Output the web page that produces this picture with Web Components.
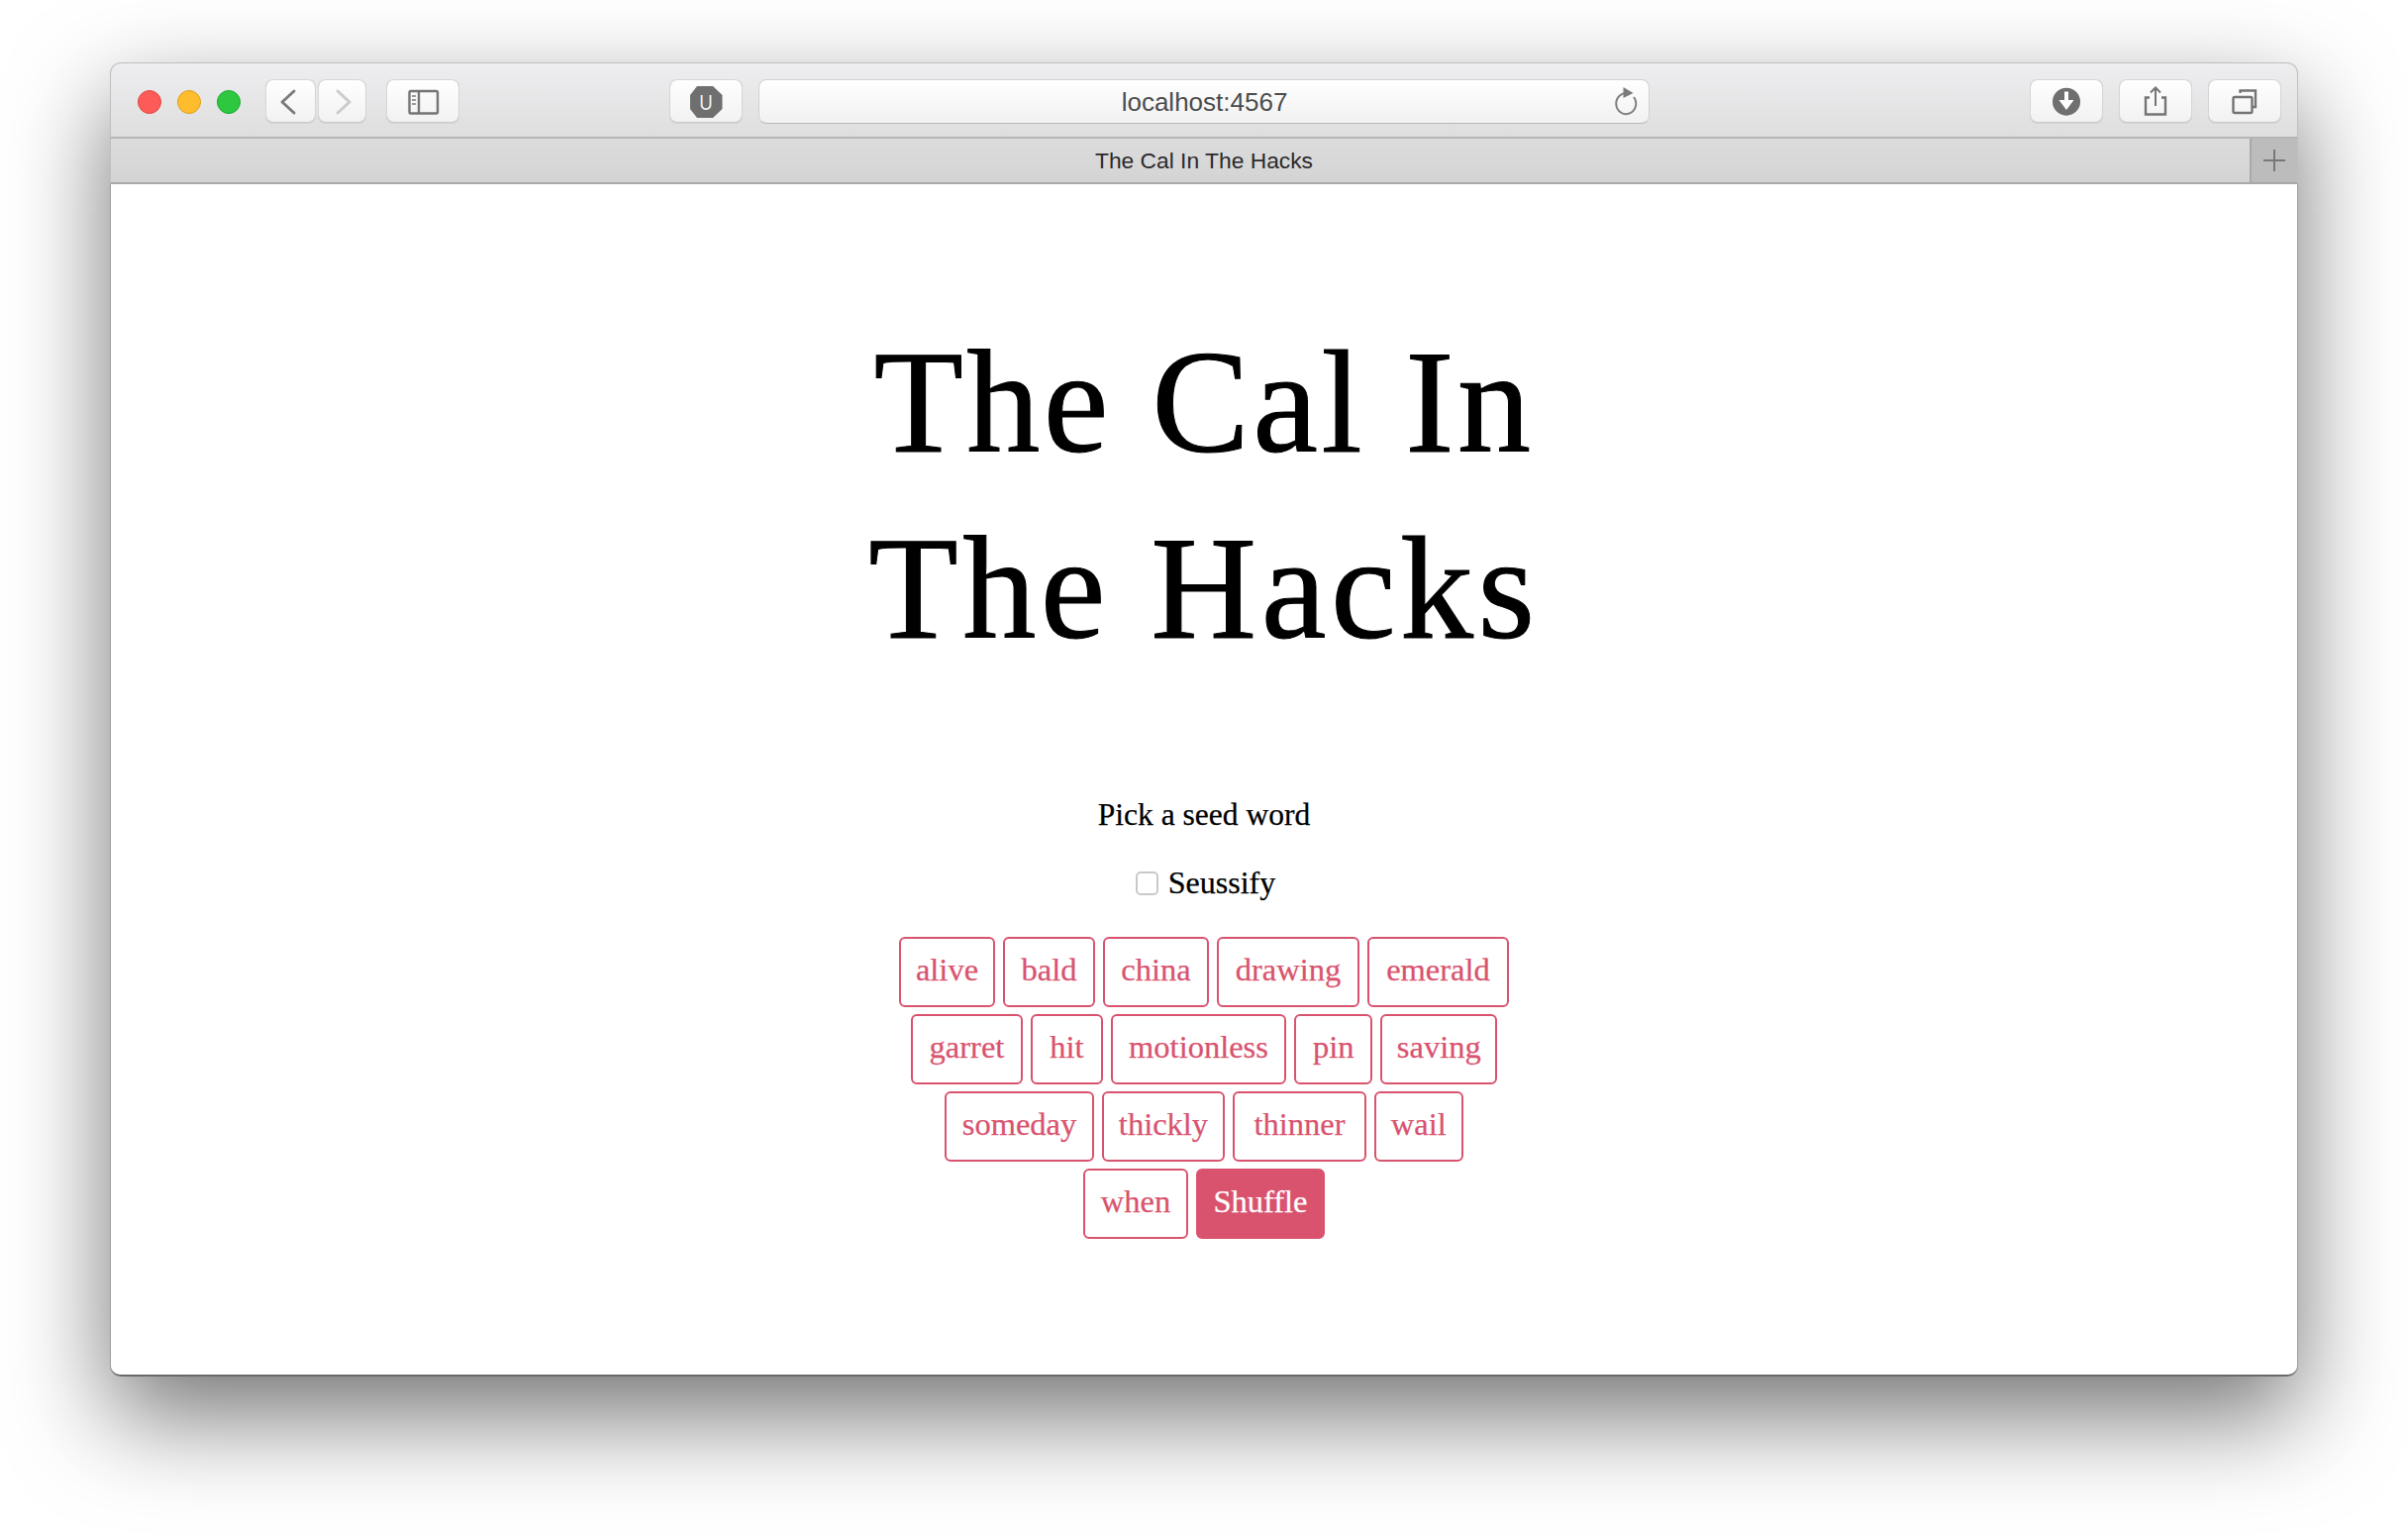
<!DOCTYPE html>
<html>
<head>
<meta charset="utf-8">
<title>The Cal In The Hacks</title>
<style>
  html, body { margin: 0; background: #fff; }
  body { padding: 63px 111px 160px; height: 1550px; box-sizing: border-box; overflow: hidden; }
</style>
</head>
<body>
<browser-window page-title="The Cal In The Hacks" address="localhost:4567">
  <cal-title>The Cal In<br><span style="letter-spacing: 4.5px">The Hacks</span></cal-title>
  <seed-picker>
    <seed-word width="97.5">alive</seed-word>
    <seed-word width="92.5">bald</seed-word>
    <seed-word width="107.5">china</seed-word>
    <seed-word width="143.5">drawing</seed-word>
    <seed-word width="143.5">emerald</seed-word>
    <seed-word width="113.5">garret</seed-word>
    <seed-word width="72.5">hit</seed-word>
    <seed-word width="177.5">motionless</seed-word>
    <seed-word width="79">pin</seed-word>
    <seed-word width="118">saving</seed-word>
    <seed-word width="150.5">someday</seed-word>
    <seed-word width="124.5">thickly</seed-word>
    <seed-word width="134.5">thinner</seed-word>
    <seed-word width="90">wail</seed-word>
    <seed-word width="106">when</seed-word>
    <seed-word width="130" primary>Shuffle</seed-word>
  </seed-picker>
</browser-window>

<script>
const ICONS = {
  back: `<svg width="51" height="45"><path d="M29 12 L17 23 L29 34" fill="none" stroke="#7c7c7c" stroke-width="3" stroke-linecap="round" stroke-linejoin="round"/></svg>`,
  forward: `<svg width="49" height="45"><path d="M20 12 L32 23 L20 34" fill="none" stroke="#cbcbcb" stroke-width="3" stroke-linecap="round" stroke-linejoin="round"/></svg>`,
  sidebar: `<svg width="74" height="45" fill="none" stroke="#747474" stroke-width="2.4">
    <rect x="23.5" y="12" width="28.5" height="22.5" rx="1.5"/>
    <path d="M33 12 V34.5"/>
    <path d="M26 17 H30 M26 21 H30 M26 25 H30" stroke="#999" stroke-width="2.2"/>
  </svg>`,
  ublock: `<svg width="74" height="45">
    <path d="M28 7 H44 L53.5 16 V30 L44 39 H28 L21 30 V16 Z" fill="#6f6f6f"/>
    <text transform="translate(37 31) scale(.85 1)" text-anchor="middle" font-family="Liberation Sans, sans-serif" font-size="22" fill="#eee">U</text>
  </svg>`,
  reload: `<svg width="32" height="45" fill="none">
    <path d="M20.8 14.5 A10 10.5 0 1 0 26 18" stroke="#7e7e7e" stroke-width="2"/>
    <path d="M15.5 8 L25.5 14 L15.5 19 Z" fill="#7a7a7a"/>
  </svg>`,
  download: `<svg width="74" height="45">
    <circle cx="37" cy="22.7" r="14" fill="#6f6f6f"/>
    <path d="M35 12.5 H39 V21 H44.5 L37 31 L29.5 21 H35 Z" fill="#fff"/>
  </svg>`,
  share: `<svg width="74" height="45" fill="none" stroke="#747474" stroke-width="2.4">
    <path d="M31 18.5 H27 V35.5 H47 V18.5 H43"/>
    <path d="M37 8.5 V27" stroke-width="2"/>
    <path d="M32 13.5 L37 8.5 L42 13.5" stroke-width="2"/>
  </svg>`,
  tabs: `<svg width="74" height="45" fill="none" stroke="#747474" stroke-width="2.4">
    <path d="M32.5 14 V11.5 H48 V28 H45"/>
    <rect x="25.5" y="18" width="19" height="16" rx="1.5"/>
  </svg>`,
};

class BrowserWindow extends HTMLElement {
  constructor() {
    super();
    const shadowRoot = this.attachShadow({ mode: 'open' });
    const title = this.getAttribute('page-title');
    const address = this.getAttribute('address');

    shadowRoot.innerHTML = `
      <style>
        :host {
          display: flex;
          flex-direction: column;
          height: 1327px;
          background: #fff;
          border-radius: 11px;
          box-shadow: 0 40px 100px rgba(0, 0, 0, 0.55);
          font-family: "Liberation Sans", Arial, sans-serif;
        }
        .toolbar {
          box-sizing: border-box;
          height: 77px;
          display: flex;
          align-items: flex-start;
          padding: 16px 16px 0 27px;
          background: linear-gradient(#eeedef, #dfdedf);
          border: 1px solid #c0bfc0;
          border-width: 1px 1px 2px 1px;
          border-bottom-color: #b6b5b6;
          border-radius: 11px 11px 0 0;
        }
        .lights { display: flex; gap: 16px; padding-top: 10.5px; margin-right: 25px; }
        .light { width: 22px; height: 22px; border-radius: 50%; border: 1px solid; }
        .close { background: #fc5b57; border-color: #e2463f; }
        .min { background: #ffbd2e; border-color: #e09e1a; }
        .max { background: #2ec840; border-color: #16a92b; }
        .nav { display: flex; gap: 2px; margin-right: 20px; }
        .address {
          box-sizing: border-box;
          width: 900px;
          height: 45px;
          margin: 0 16px;
          display: flex;
          align-items: center;
          background: linear-gradient(#fff, #f1f1f1);
          border: 1px solid #d2d1d2;
          border-bottom-color: #b9b8b9;
          border-radius: 8px;
          color: #4c4c4c;
          font-size: 26px;
        }
        .address span { flex: 1; text-align: center; padding: 2px 0 0 42px; }
        .actions { display: flex; gap: 16px; margin-left: auto; }
        .tabs {
          box-sizing: border-box;
          height: 46px;
          display: flex;
          background: linear-gradient(#dddcdd, #d5d4d5);
          border: 1px solid #c0bfc0;
          border-width: 0 1px 2px 1px;
          border-bottom-color: #a9a8a9;
        }
        .tab {
          flex: 1;
          padding-left: 48px;
          text-align: center;
          font-size: 22.8px;
          line-height: 44px;
          color: #2a2a2a;
        }
        .new-tab {
          width: 46px;
          background: #bdbcbd;
          border-left: 2px solid #aaa9aa;
          display: flex;
          align-items: center;
          justify-content: center;
        }
        .content {
          flex: 1;
          background: #fff;
          border-radius: 0 0 11px 11px;
          box-shadow: inset 1px 0 0 #9d9d9d, inset -1px 0 0 #9d9d9d, inset 0 -2px 0 #6a6a6a;
          display: flex;
          flex-direction: column;
          align-items: center;
          padding-top: 126px;
        }
      </style>

      <div class="toolbar">
        <div class="lights">
          <div class="light close"></div>
          <div class="light min"></div>
          <div class="light max"></div>
        </div>
        <div class="nav">
          <tool-button width="51">${ICONS.back}</tool-button>
          <tool-button width="49">${ICONS.forward}</tool-button>
        </div>
        <tool-button width="74">${ICONS.sidebar}</tool-button>
        <div style="width:212px"></div>
        <tool-button width="74">${ICONS.ublock}</tool-button>
        <div class="address">
          <span>${address}</span>
          ${ICONS.reload}
          <div style="width:9px"></div>
        </div>
        <div class="actions">
          <tool-button width="74">${ICONS.download}</tool-button>
          <tool-button width="74">${ICONS.share}</tool-button>
          <tool-button width="74">${ICONS.tabs}</tool-button>
        </div>
      </div>
      <div class="tabs">
        <div class="tab">${title}</div>
        <div class="new-tab">
          <svg width="24" height="24"><path d="M12 1 V23 M1 12 H23" stroke="#787878" stroke-width="2"/></svg>
        </div>
      </div>
      <div class="content"><slot></slot></div>
    `;
  }
}

class ToolButton extends HTMLElement {
  constructor() {
    super();
    const shadowRoot = this.attachShadow({ mode: 'open' });

    shadowRoot.innerHTML = `
      <style>
        :host {
          display: block;
          box-sizing: border-box;
          height: 45px;
          background: linear-gradient(#fff, #f1f1f1);
          border-radius: 8px;
          box-shadow: inset 0 0 0 1px #d6d5d6, inset 0 -1px 0 1px #cbcacb;
          flex: none;
        }
        ::slotted(svg) { display: block; }
      </style>
      <slot></slot>
    `;
    this.style.width = this.getAttribute('width') + 'px';
  }
}

class CalTitle extends HTMLElement {
  constructor() {
    super();
    const shadowRoot = this.attachShadow({ mode: 'open' });

    shadowRoot.innerHTML = `
      <style>
        :host {
          display: block;
          text-align: center;
          font-family: "Liberation Serif", "Times New Roman", serif;
          font-size: 148px;
          line-height: 188px;
          letter-spacing: 3.4px;
          -webkit-text-stroke: 1px #000;
          color: #000;
        }
      </style>
      <slot></slot>
    `;
  }
}

class SeedPicker extends HTMLElement {
  constructor() {
    super();
    const shadowRoot = this.attachShadow({ mode: 'open' });

    shadowRoot.innerHTML = `
      <style>
        :host {
          display: flex;
          flex-direction: column;
          align-items: center;
          font-family: "Liberation Serif", "Times New Roman", serif;
          font-size: 31.5px;
          line-height: 40px;
          color: #000;
          margin-top: 115px;
          -webkit-text-stroke: 0.25px currentColor;
        }
        .seuss {
          display: flex;
          align-items: center;
          gap: 10px;
          margin: 28px 0 35px 3px;
          font-size: 32px;
        }
        .box {
          box-sizing: border-box;
          width: 23px;
          height: 24px;
          margin-top: 2px;
          border: 2px solid #c9c9c9;
          border-radius: 5px;
          background: #fff;
        }
        .words {
          width: 624px;
          display: flex;
          flex-wrap: wrap;
          justify-content: center;
          gap: 7px 8px;
        }
      </style>
      <div>Pick a seed word</div>
      <label class="seuss"><span class="box"></span><span>Seussify</span></label>
      <div class="words"><slot></slot></div>
    `;
  }
}

class SeedWord extends HTMLElement {
  constructor() {
    super();
    const shadowRoot = this.attachShadow({ mode: 'open' });

    shadowRoot.innerHTML = `
      <style>
        :host {
          display: flex;
          box-sizing: border-box;
          height: 71px;
          padding-bottom: 5px;
          align-items: center;
          justify-content: center;
          border: 2px solid #d9536f;
          border-radius: 6px;
          color: #d9536f;
          background: #fff;
          font-size: 32.5px;
        }
        :host([primary]) {
          background: #d9536f;
          color: #fff;
        }
      </style>
      <slot></slot>
    `;
    this.style.width = this.getAttribute('width') + 'px';
  }
}

window.customElements.define('tool-button', ToolButton);
window.customElements.define('browser-window', BrowserWindow);
window.customElements.define('cal-title', CalTitle);
window.customElements.define('seed-word', SeedWord);
window.customElements.define('seed-picker', SeedPicker);
</script>
</body>
</html>
